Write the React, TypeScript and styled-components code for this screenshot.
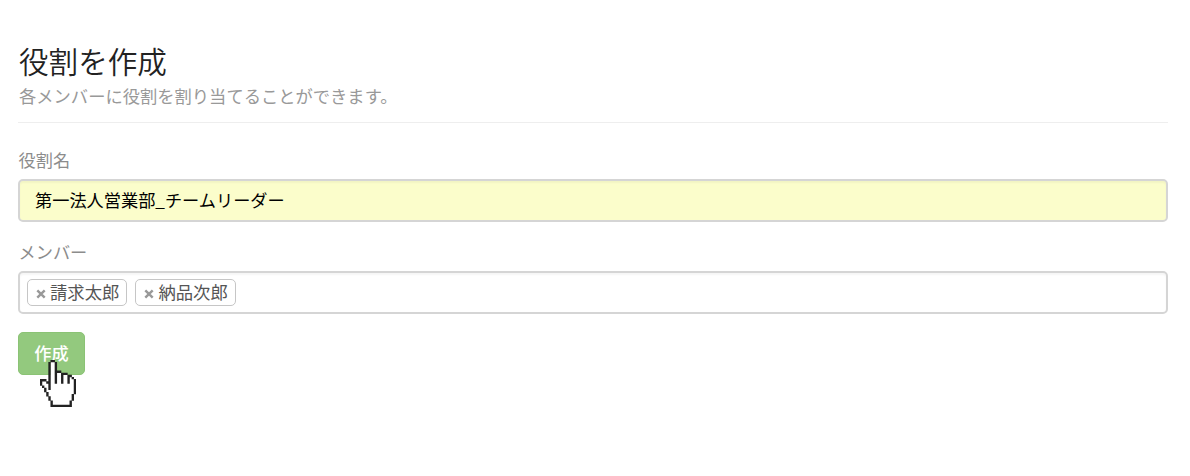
import React from "react";
import styled, { createGlobalStyle } from "styled-components";

const GlobalStyle = createGlobalStyle`
  * { box-sizing: border-box; }
  body {
    margin: 0;
    background: #fff;
    font-family: "Noto Sans CJK JP", sans-serif;
    font-size: 17.2px;
    color: #555;
  }
`;

const Page = styled.main`
  padding: 41px 22px 60px 18px;
  width: 1190px;
`;

const Header = styled.header`
  height: 82px;
  padding-left: 1px;
  border-bottom: 1px solid #eee;
`;

const Title = styled.h1`
  margin: 0;
  font-size: 29.6px;
  font-weight: 350;
  line-height: 40px;
  color: #222;
`;

const Subtitle = styled.p`
  margin: 2px 0 0;
  font-size: 17.3px;
  line-height: 26px;
  color: #999;
`;

const Form = styled.form`
  margin: 24px 0 0;
`;

const Field = styled.div`
  display: flex;
  flex-direction: column;
  gap: 7px;
  margin-bottom: 17px;
`;

const Label = styled.label`
  line-height: 25px;
  padding-left: 0.5px;
  color: #8c8c8c;
`;

const fieldBox = `
  width: 100%;
  height: 43px;
  border: 2px solid #d5d5d5;
  border-radius: 5px;
  box-shadow: inset 0 2px 2px rgba(0, 0, 0, 0.04);
`;

const TextInput = styled.input`
  ${fieldBox}
  padding: 0 15px 3px;
  background: #fbfdcb;
  color: #000;
  font: inherit;
  outline: none;
`;

const TagBox = styled.div`
  ${fieldBox}
  display: flex;
  gap: 8px;
  padding: 6px 7px;
`;

const Tag = styled.span`
  display: flex;
  align-items: flex-start;
  gap: 4px;
  height: 27px;
  padding: 0 7px 0 8px;
  border: 1px solid #c6c6c6;
  border-radius: 5px;
  font-size: 17.35px;
  line-height: 23px;
`;

const CloseIcon = styled.svg`
  width: 10px;
  height: 10px;
  margin-top: 9px;
`;

const Actions = styled.div`
  position: relative;
  padding-top: 1px;
`;

const Submit = styled.button`
  display: block;
  width: 67px;
  height: 43px;
  padding: 0 0 2px;
  border: 1px solid #8bc375;
  border-radius: 5px;
  background: #93c97e;
  color: #fff;
  font: inherit;
  font-weight: 500;
`;

const Pointer = styled.svg`
  position: absolute;
  left: 22px;
  top: 29px;
  width: 36px;
  height: 47px;
`;

const HAND = [
  ".....XX..........",
  "....XooX.........",
  "....XooX.........",
  "....XooX.........",
  "....XooX.........",
  "....XooXXX.......",
  "....XooXooXXX....",
  "....XooXooXooXX..",
  "....XooXooXooXoX.",
  "XXX.XooXooXooXooX",
  "XooXXooXooXooXooX",
  "XoooXoooooooooooX",
  ".XooXoooooooooooX",
  "..XoXoooooooooooX",
  "..XoooooooooooooX",
  "...XooooooooooooX",
  "...XoooooooooooX.",
  "....XooooooooooX.",
  "....XooooooooooX.",
  ".....XooooooooX..",
  ".....XooooooooX..",
  ".....XXXXXXXXXX..",
];

const cells = (mark: string) =>
  HAND.flatMap((row, y) =>
    [...row].map((c, x) => (c === mark ? `M${x - 0.06} ${y - 0.06}h1.12v1.12h-1.12z` : "")),
  ).join("");

const HandCursor = () => (
  <Pointer viewBox="0 0 17 22" preserveAspectRatio="none">
    <path d={cells("o")} fill="#fff" />
    <path d={cells("X")} fill="#222" />
  </Pointer>
);

const members = ["請求太郎", "納品次郎"];

export default function App() {
  return (
    <>
      <GlobalStyle />
      <Page>
        <Header>
          <Title>役割を作成</Title>
          <Subtitle>各メンバーに役割を割り当てることができます。</Subtitle>
        </Header>
        <Form>
          <Field>
            <Label htmlFor="role">役割名</Label>
            <TextInput id="role" defaultValue="第一法人営業部_チームリーダー" />
          </Field>
          <Field>
            <Label>メンバー</Label>
            <TagBox>
              {members.map((name) => (
                <Tag key={name}>
                  <CloseIcon viewBox="0 0 10 10">
                    <path d="M1.3 1.3 L8.7 8.7 M8.7 1.3 L1.3 8.7" stroke="#999" strokeWidth="2.4" />
                  </CloseIcon>
                  {name}
                </Tag>
              ))}
            </TagBox>
          </Field>
          <Actions>
            <Submit type="button">作成</Submit>
            <HandCursor />
          </Actions>
        </Form>
      </Page>
    </>
  );
}
